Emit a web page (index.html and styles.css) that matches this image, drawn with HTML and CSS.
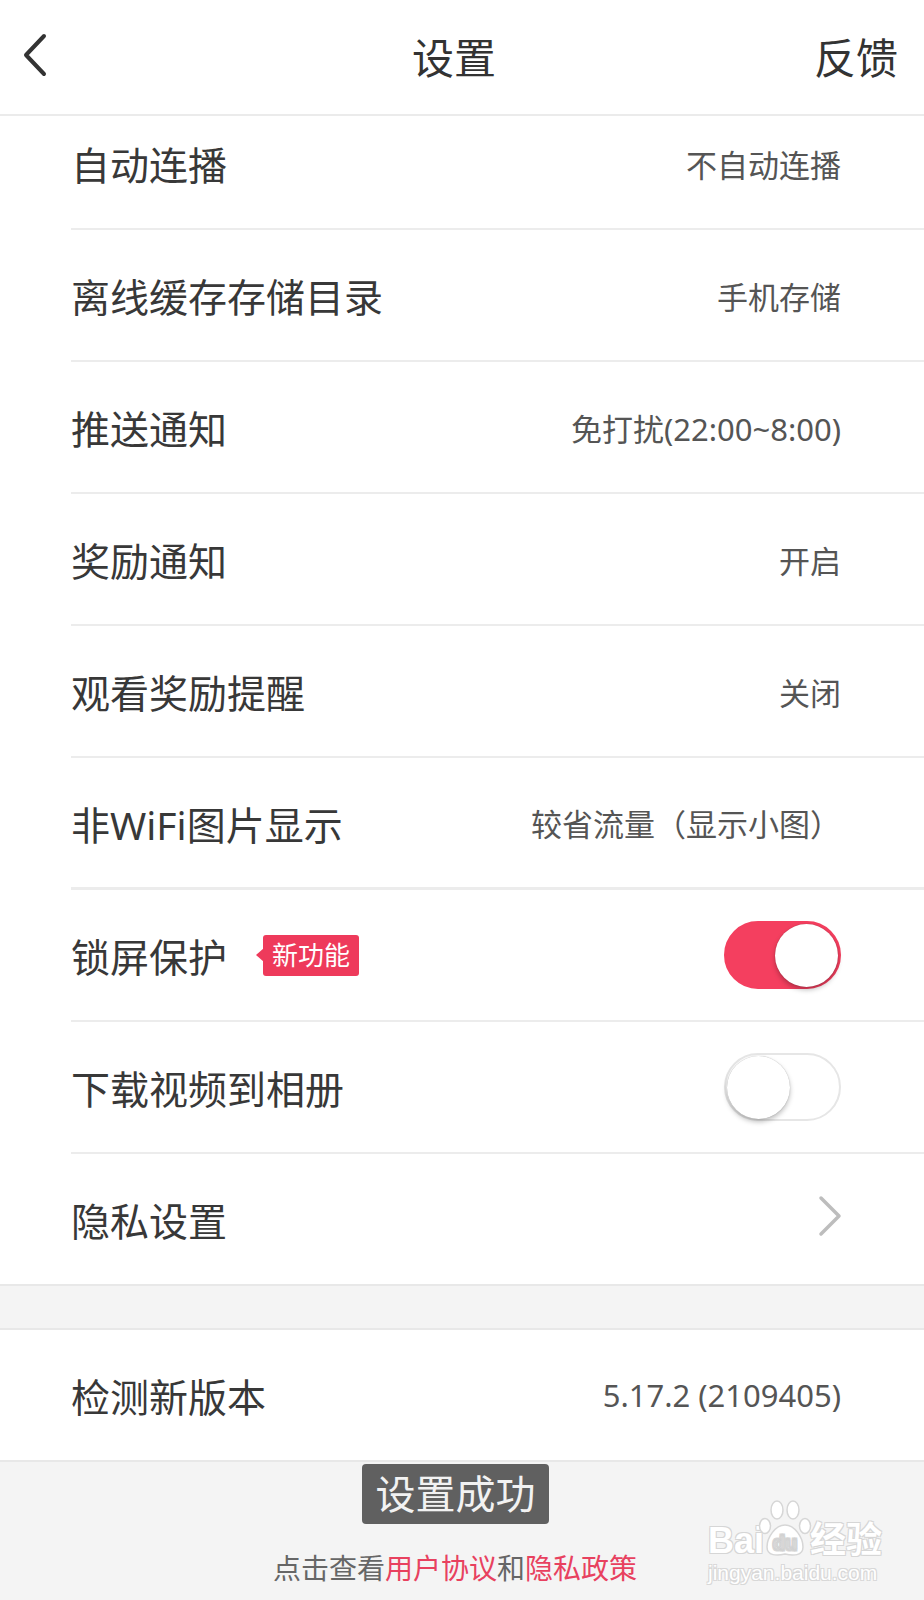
FILE: index.html
```html
<!DOCTYPE html>
<html lang="zh-CN">
<head>
  <meta charset="UTF-8">
  <title>设置</title>
  <link rel="stylesheet" href="styles.css">
</head>
<body>
  <div class="topbar">
    <div class="back">
      <svg width="26" height="44" viewBox="0 0 26 44"><polyline points="22,3 4,22 22,41" fill="none" stroke="#333" stroke-width="4" stroke-linecap="round" stroke-linejoin="round"/></svg>
    </div>
    <div class="title">设置</div>
    <div class="feedback">反馈</div>
  </div>

  <div class="group">
    <div class="row first">
      <span class="label">自动连播</span>
      <span class="value">不自动连播</span>
    </div>
    <div class="row">
      <span class="label">离线缓存存储目录</span>
      <span class="value">手机存储</span>
    </div>
    <div class="row">
      <span class="label">推送通知</span>
      <span class="value">免打扰(22:00~8:00)</span>
    </div>
    <div class="row">
      <span class="label">奖励通知</span>
      <span class="value">开启</span>
    </div>
    <div class="row">
      <span class="label">观看奖励提醒</span>
      <span class="value">关闭</span>
    </div>
    <div class="row thick">
      <span class="label">非WiFi图片显示</span>
      <span class="value">较省流量（显示小图）</span>
    </div>
    <div class="row">
      <span class="label">锁屏保护 <span class="badge">新功能</span></span>
      <span class="switch on"><span class="knob"></span></span>
    </div>
    <div class="row">
      <span class="label">下载视频到相册</span>
      <span class="switch"><span class="knob"></span></span>
    </div>
    <div class="row last">
      <span class="label">隐私设置</span>
      <svg class="arrow" width="26" height="42" viewBox="0 0 26 42"><polyline points="4,3 22,21 4,39" fill="none" stroke="#bdbdbd" stroke-width="3.5" stroke-linecap="round" stroke-linejoin="round"/></svg>
    </div>
  </div>

  <div class="group second">
    <div class="row last">
      <span class="label">检测新版本</span>
      <span class="value">5.17.2 (2109405)</span>
    </div>
  </div>

  <div class="footer">
    <div class="toast">设置成功</div>
    <p class="terms">点击查看<span class="link">用户协议</span>和<span class="link">隐私政策</span></p>
    <div class="watermark">
      <div class="mark">
        <span>Bai</span>
        <svg class="paw" width="54" height="60" viewBox="0 0 54 60">
          <g fill="#fff" stroke="#d6d6d6" stroke-width="1.5">
            <ellipse cx="7" cy="28" rx="5.5" ry="7.5"/>
            <ellipse cx="19" cy="12" rx="6" ry="9"/>
            <ellipse cx="35" cy="12" rx="6" ry="9"/>
            <ellipse cx="47" cy="28" rx="5.5" ry="7.5"/>
            <path d="M27 27 C17 27 9 40 9 49 C9 58 19 58 27 56 C35 58 45 58 45 49 C45 40 37 27 27 27 Z"/>
          </g>
          <text x="27" y="52" text-anchor="middle" class="du">du</text>
        </svg>
        <span>经验</span>
      </div>
      <div class="site">jingyan.baidu.com</div>
    </div>
  </div>
</body>
</html>
```

FILE: styles.css
```css
* { box-sizing: border-box; }

body {
  margin: 0;
  background: #f4f4f4;
  font-family: "Noto Sans", "Noto Sans CJK SC", sans-serif;
  color: #383838;
  overflow: hidden;
}

.topbar {
  position: relative;
  z-index: 2;
  height: 116px;
  background: #fff;
  border-bottom: 2px solid #ebebeb;
  display: grid;
  grid-template-columns: 1fr auto 1fr;
  align-items: center;
  padding: 0 26px 4px 22px;
}

.back {
  display: flex;
  align-items: center;
}

.title {
  font-size: 42px;
  color: #333;
  margin-right: 12px;
}

.feedback {
  font-size: 42px;
  color: #333;
  text-align: right;
}

.group {
  background: #fff;
  overflow: hidden;
  border-bottom: 2px solid #e8e8e8;
}

.second {
  margin-top: 42px;
  border-top: 2px solid #e8e8e8;
}

.row {
  height: 132px;
  margin-left: 71px;
  padding-right: 83px;
  border-bottom: 2px solid #ececec;
  display: flex;
  justify-content: space-between;
  align-items: center;
}

.row.first {
  margin-top: -18px;
}

.row.thick {
  border-bottom-width: 3px;
}

.row.last {
  border-bottom: none;
  height: 130px;
}

.label {
  font-size: 39px;
  color: #383838;
  display: flex;
  align-items: center;
}

.value {
  font-size: 31px;
  color: #555;
}

.badge {
  position: relative;
  margin-left: 36px;
  background: #ee3a5b;
  color: #fff;
  font-size: 26px;
  line-height: 41px;
  height: 41px;
  padding: 0 9px;
  border-radius: 3px;
}

.badge::before {
  content: "";
  position: absolute;
  left: -7px;
  top: 13px;
  border-top: 7px solid transparent;
  border-bottom: 7px solid transparent;
  border-right: 8px solid #ee3a5b;
}

.switch {
  width: 117px;
  height: 68px;
  border-radius: 34px;
  border: 2px solid #e6e6e6;
  background: #fff;
  display: flex;
  align-items: center;
  padding: 0 1px;
}

.switch.on {
  background: #f43f5f;
  border-color: #f43f5f;
  justify-content: flex-end;
}

.knob {
  width: 63px;
  height: 63px;
  border-radius: 50%;
  background: #fff;
  box-shadow: 0 3px 5px rgba(0, 0, 0, 0.25), 0 0 1px rgba(0, 0, 0, 0.3);
}

.arrow {
  margin-right: -2px;
  margin-top: -6px;
}

.footer {
  position: relative;
  height: 140px;
  padding-top: 86px;
}

.toast {
  position: absolute;
  left: 362px;
  top: 2px;
  width: 187px;
  height: 60px;
  background: #606060;
  color: #f2f2f2;
  font-size: 40px;
  line-height: 60px;
  text-align: center;
  border-radius: 4px;
}

.terms {
  margin: 0;
  text-align: center;
  font-size: 28px;
  line-height: 40px;
  color: #666;
  margin-right: 14px;
}

.link {
  color: #e8415f;
}

.watermark {
  position: absolute;
  left: 708px;
  top: 36px;
  white-space: nowrap;
}

.mark {
  display: flex;
  align-items: flex-end;
  font-family: "Liberation Sans", "Noto Sans CJK SC", sans-serif;
  font-size: 36px;
  line-height: 34px;
  font-weight: bold;
  color: #fff;
  text-shadow: -1px -1px 0 #d6d6d6, 1px -1px 0 #d6d6d6, -1px 1px 0 #d6d6d6, 1px 1px 0 #d6d6d6;
}

.paw {
  margin: 0 -2px 0 -6px;
}

.du {
  font-family: "Liberation Sans", sans-serif;
  font-size: 20px;
  font-weight: bold;
  fill: #fff;
  stroke: #d0d0d0;
  stroke-width: 0.8;
}

.site {
  margin-top: 4px;
  font-family: "Liberation Sans", sans-serif;
  font-size: 21px;
  line-height: 22px;
  color: #fff;
  text-shadow: -1px -1px 0 #d8d8d8, 1px -1px 0 #d8d8d8, -1px 1px 0 #d8d8d8, 1px 1px 0 #d8d8d8;
}
```
